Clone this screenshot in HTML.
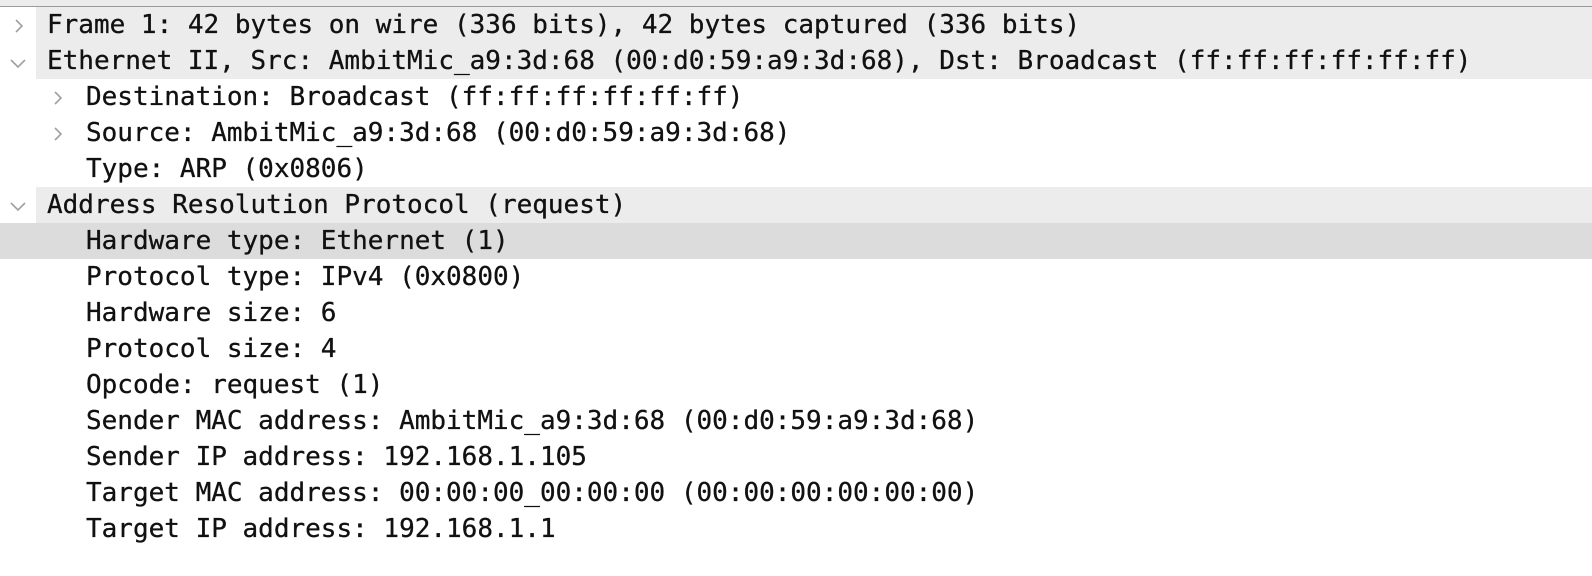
<!DOCTYPE html>
<html><head><style>
html,body{margin:0;padding:0;background:#fff;width:1592px;height:576px;overflow:hidden;}
.top{position:absolute;left:0;top:0;width:1592px;height:6px;background:#ececec;border-bottom:1.5px solid #9a9a9a;}
.row{position:absolute;left:0;width:1592px;height:36px;}
.row .bg{position:absolute;left:36px;right:0;top:0;bottom:0;background:#ececec;}
.row.sel{background:#dcdcdc;}
.t{position:absolute;font-family:"DejaVu Sans Mono","Liberation Mono",monospace;font-size:26px;color:#111;line-height:36px;height:36px;white-space:pre;-webkit-text-stroke:0.3px #111;}
svg{position:absolute;}
</style></head><body>
<div class="top"></div>
<div class="row" style="top:7px"><div class="bg"></div></div>
<div class="row" style="top:43px"><div class="bg"></div></div>
<div class="row" style="top:187px"><div class="bg"></div></div>
<div class="row sel" style="top:223px"></div>

<svg style="left:13px;top:18px" width="12" height="16"><path d="M3 2 L9 8 L3 14" fill="none" stroke="#a0a0a0" stroke-width="1.6"/></svg>
<svg style="left:9px;top:57px" width="18" height="12"><path d="M2 3 L9 10 L16 3" fill="none" stroke="#a0a0a0" stroke-width="1.6"/></svg>
<svg style="left:52px;top:90px" width="12" height="16"><path d="M3 2 L9 8 L3 14" fill="none" stroke="#a0a0a0" stroke-width="1.6"/></svg>
<svg style="left:52px;top:126px" width="12" height="16"><path d="M3 2 L9 8 L3 14" fill="none" stroke="#a0a0a0" stroke-width="1.6"/></svg>
<svg style="left:9px;top:200px" width="18" height="12"><path d="M2 3 L9 10 L16 3" fill="none" stroke="#a0a0a0" stroke-width="1.6"/></svg>

<span class="t" style="left:47px;top:7px">Frame 1: 42 bytes on wire (336 bits), 42 bytes captured (336 bits)</span>
<span class="t" style="left:47px;top:43px">Ethernet II, Src: AmbitMic_a9:3d:68 (00:d0:59:a9:3d:68), Dst: Broadcast (ff:ff:ff:ff:ff:ff)</span>
<span class="t" style="left:86px;top:79px">Destination: Broadcast (ff:ff:ff:ff:ff:ff)</span>
<span class="t" style="left:86px;top:115px">Source: AmbitMic_a9:3d:68 (00:d0:59:a9:3d:68)</span>
<span class="t" style="left:86px;top:151px">Type: ARP (0x0806)</span>
<span class="t" style="left:47px;top:187px">Address Resolution Protocol (request)</span>
<span class="t" style="left:86px;top:223px">Hardware type: Ethernet (1)</span>
<span class="t" style="left:86px;top:259px">Protocol type: IPv4 (0x0800)</span>
<span class="t" style="left:86px;top:295px">Hardware size: 6</span>
<span class="t" style="left:86px;top:331px">Protocol size: 4</span>
<span class="t" style="left:86px;top:367px">Opcode: request (1)</span>
<span class="t" style="left:86px;top:403px">Sender MAC address: AmbitMic_a9:3d:68 (00:d0:59:a9:3d:68)</span>
<span class="t" style="left:86px;top:439px">Sender IP address: 192.168.1.105</span>
<span class="t" style="left:86px;top:475px">Target MAC address: 00:00:00_00:00:00 (00:00:00:00:00:00)</span>
<span class="t" style="left:86px;top:511px">Target IP address: 192.168.1.1</span>
</body></html>
